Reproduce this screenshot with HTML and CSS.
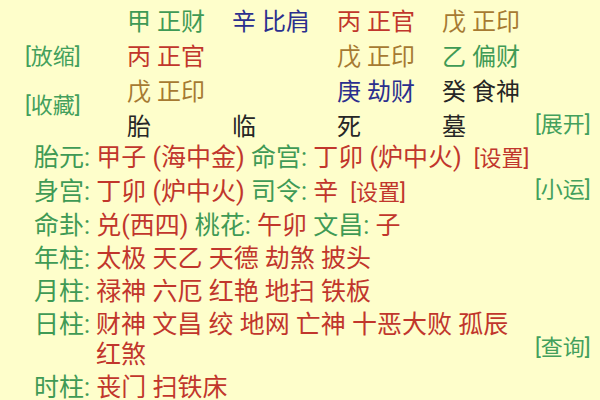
FILE: index.html
```html
<!DOCTYPE html>
<html lang="zh-CN">
<head>
<meta charset="utf-8">
<title>排盘</title>
<link rel="stylesheet" href="styles.css">
</head>
<body>
<div class="page">
  <section class="top">
    <div class="side-left">
      <span class="btn g first">[放缩]</span>
      <span class="btn g second">[收藏]</span>
    </div>
    <div class="grid">
      <div class="cell"><span class="green">甲 正财</span></div>
      <div class="cell"><span class="blue">辛 比肩</span></div>
      <div class="cell"><span class="red">丙 正官</span></div>
      <div class="cell"><span class="brown">戊 正印</span></div>

      <div class="cell"><span class="red">丙 正官</span></div>
      <div class="cell"></div>
      <div class="cell"><span class="brown">戊 正印</span></div>
      <div class="cell"><span class="green">乙 偏财</span></div>

      <div class="cell"><span class="brown">戊 正印</span></div>
      <div class="cell"></div>
      <div class="cell"><span class="blue">庚 劫财</span></div>
      <div class="cell"><span class="dark">癸 食神</span></div>

      <div class="cell"><span class="dark">胎</span></div>
      <div class="cell"><span class="dark">临</span></div>
      <div class="cell"><span class="dark">死</span></div>
      <div class="cell"><span class="dark">墓</span></div>
    </div>
    <div class="side-right">
      <span class="btn g">[展开]</span>
    </div>
  </section>

  <section class="info">
    <div class="row">
      <div class="text">
        <span class="lbl">胎元:</span> <span class="val">甲子 (海中金)</span> <span class="lbl">命宫:</span> <span class="val">丁卯 (炉中火)</span><span class="btn r set">[设置]</span>
      </div>
    </div>
    <div class="row">
      <div class="text">
        <span class="lbl">身宫:</span> <span class="val">丁卯 (炉中火)</span> <span class="lbl">司令:</span> <span class="val">辛</span><span class="btn r set">[设置]</span>
      </div>
      <div class="aside mid"><span class="btn g">[小运]</span></div>
    </div>
    <div class="row">
      <div class="text">
        <span class="lbl">命卦:</span> <span class="val">兑(西四)</span> <span class="lbl">桃花:</span> <span class="val">午卯</span> <span class="lbl">文昌:</span> <span class="val">子</span>
      </div>
    </div>
    <div class="row">
      <div class="text">
        <span class="lbl">年柱:</span> <span class="val">太极 天乙 天德 劫煞 披头</span>
      </div>
    </div>
    <div class="row">
      <div class="text">
        <span class="lbl">月柱:</span> <span class="val">禄神 六厄 红艳 地扫 铁板</span>
      </div>
    </div>
    <div class="row">
      <div class="text pillar">
        <span class="lbl">日柱:</span>
        <span class="val">财神 文昌 绞 地网 亡神 十恶大败 孤辰 红煞</span>
      </div>
      <div class="aside low"><span class="btn g">[查询]</span></div>
    </div>
    <div class="row">
      <div class="text">
        <span class="lbl">时柱:</span> <span class="val">丧门 扫铁床</span>
      </div>
    </div>
  </section>
</div>
</body>
</html>
```

FILE: styles.css
```css
html, body {
  margin: 0;
  padding: 0;
  background: #fefecb;
}

body {
  font-family: Roboto, "Noto Sans CJK SC", sans-serif;
  width: 600px;
  height: 400px;
  overflow: hidden;
}

.page {
  display: flex;
  flex-direction: column;
}

.green { color: #3f9a55; }
.red { color: #c1362c; }
.blue { color: #2b2f8e; }
.brown { color: #a67a32; }
.dark { color: #262626; }

.btn {
  font-size: 22px;
  line-height: 30px;
  white-space: nowrap;
}
.btn.g { color: #43a05c; }
.btn.r { color: #c1362c; }

/* top section */
.top {
  display: flex;
  padding-top: 5px;
}

.side-left {
  width: 102px;
  padding-left: 25px;
  display: flex;
  flex-direction: column;
  align-items: flex-start;
}
.side-left .first { margin-top: 37px; }
.side-left .second { margin-top: 19px; }

.grid {
  width: 408px;
  display: grid;
  grid-template-columns: 105px 105px 105px 1fr;
  grid-auto-rows: 35px;
  font-size: 24px;
  line-height: 35px;
}
.cell {
  white-space: nowrap;
}

.side-right {
  flex: 1;
  display: flex;
  flex-direction: column;
  justify-content: flex-end;
  padding-bottom: 5px;
}

/* info rows */
.info {
  margin-top: -2px;
  padding-left: 34px;
  font-size: 25px;
  line-height: 30px;
}

.row {
  display: flex;
  margin-bottom: 3px;
}

.text {
  flex: 1;
  min-width: 0;
}

.pillar {
  display: flex;
  gap: 6px;
}
.pillar .lbl { flex: none; }

.lbl { color: #3f9a55; }
.val { color: #c1362c; }

.set { margin-left: 12px; }

.aside {
  width: 65px;
  flex: none;
}
.aside.mid { margin-top: -3px; }
.aside.low {
  align-self: flex-end;
  margin-bottom: 7px;
}
```
